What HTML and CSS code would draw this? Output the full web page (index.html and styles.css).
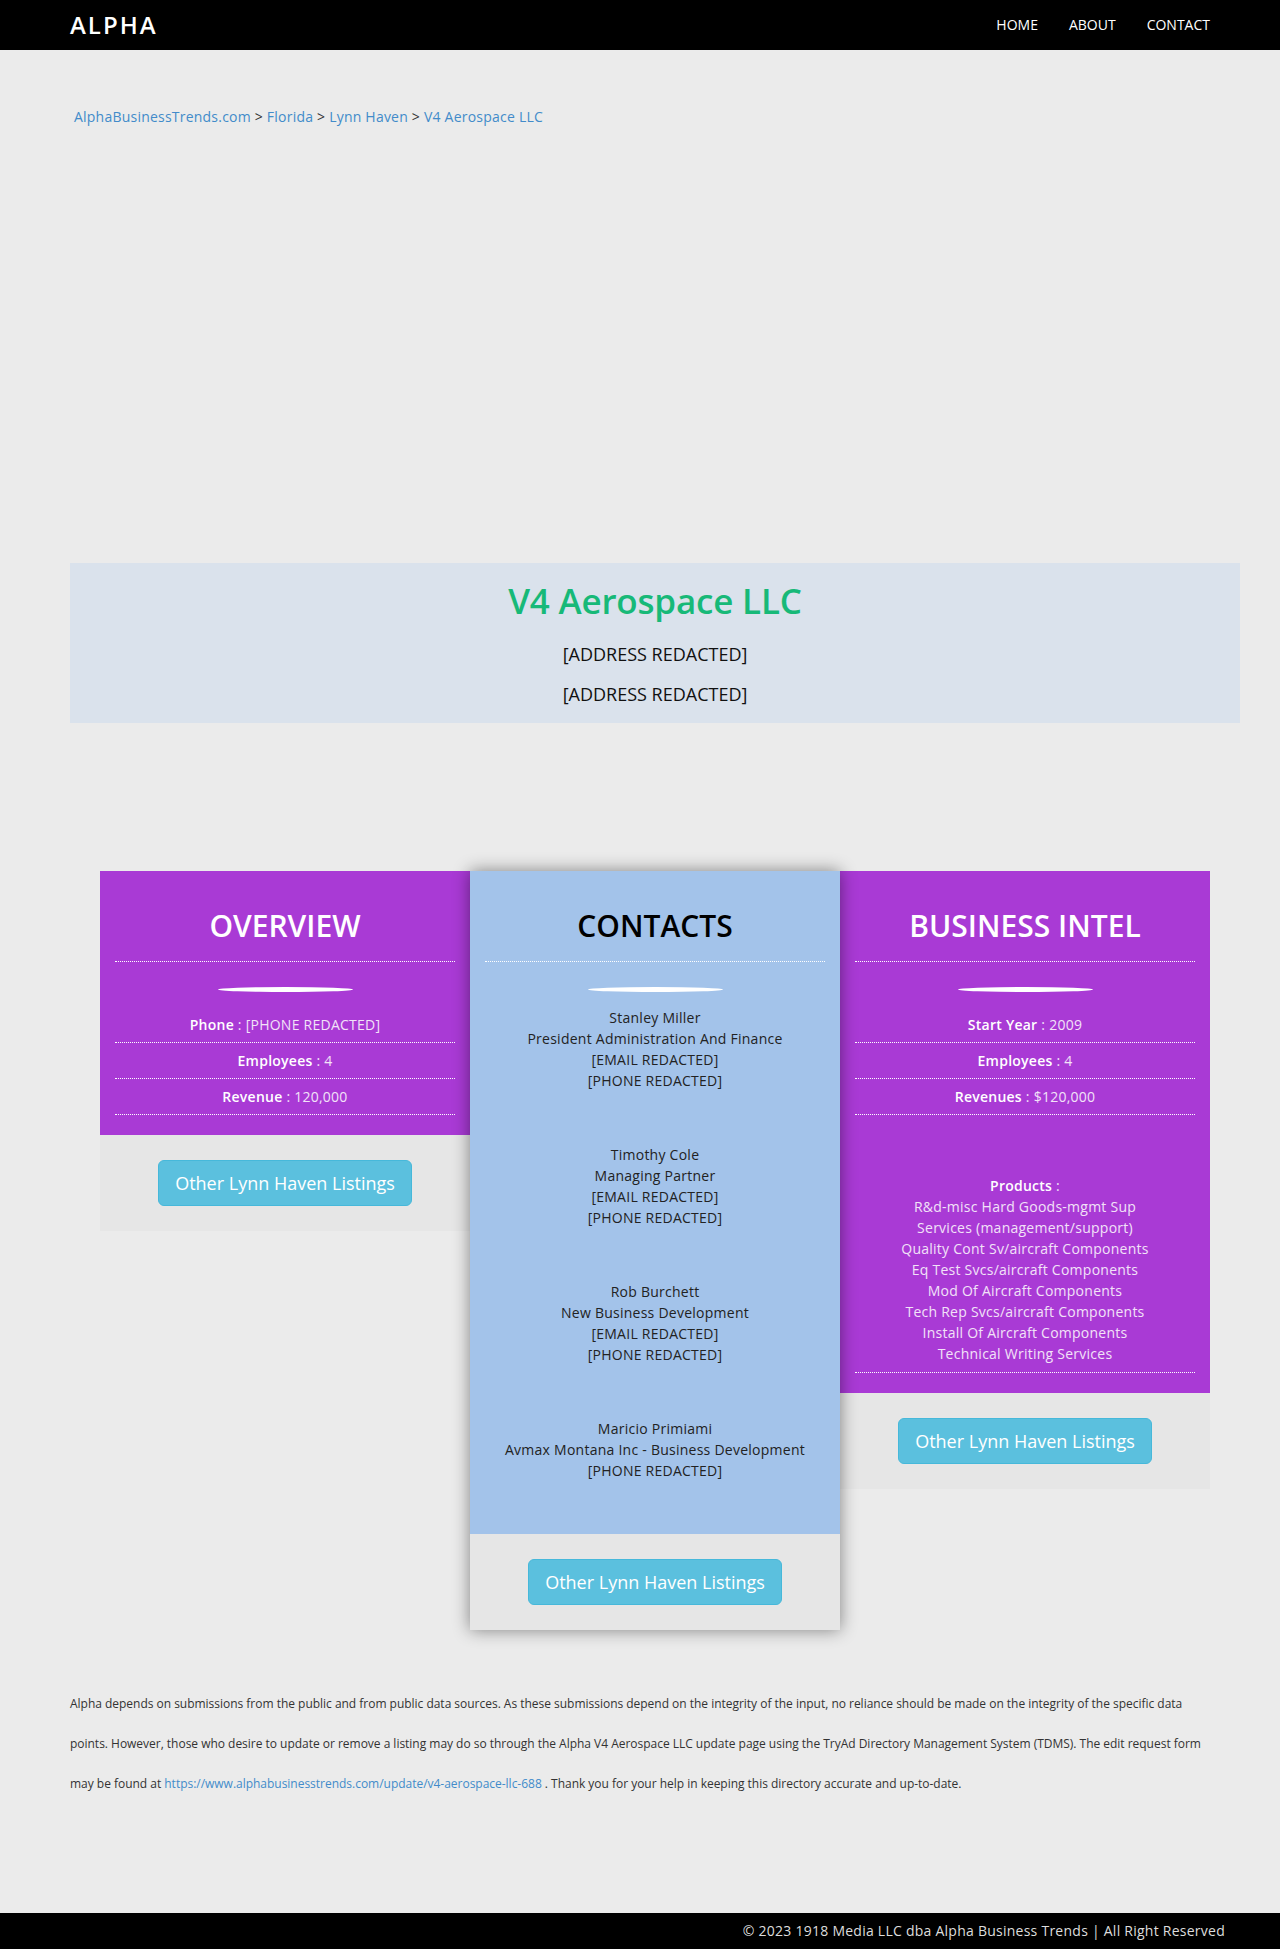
FILE: index.html
```html
<!DOCTYPE html>
<html lang="en">
<head>
<meta charset="utf-8">
<title>V4 Aerospace LLC</title>
<link rel="stylesheet" href="styles.css">
</head>
<body>
<header class="topbar">
  <div class="topbar-inner">
    <a class="brand" href="#">ALPHA</a>
    <nav class="nav">
      <a href="#">HOME</a>
      <a href="#">ABOUT</a>
      <a href="#">CONTACT</a>
    </nav>
  </div>
</header>

<main class="main">
  <div class="crumbs">
    <a href="#">AlphaBusinessTrends.com</a> &gt; <a href="#">Florida</a> &gt; <a href="#">Lynn Haven</a> &gt; <a href="#">V4 Aerospace LLC</a>
  </div>

  <div class="ad-space"></div>

  <section class="company">
    <h1 class="company-name">V4 Aerospace LLC</h1>
    <p class="addr">[ADDRESS REDACTED]</p>
    <p class="addr">[ADDRESS REDACTED]</p>
  </section>

  <section class="cards">
    <div class="card">
      <div class="card-body purple">
        <h2 class="card-title">OVERVIEW</h2>
        <div class="swoosh"></div>
        <ul class="facts">
          <li><b>Phone</b> <span class="val">: [PHONE REDACTED]</span></li>
          <li><b>Employees</b> <span class="val">: 4</span></li>
          <li><b>Revenue</b> <span class="val">: 120,000</span></li>
        </ul>
      </div>
      <div class="card-foot"><a class="btn" href="#">Other Lynn Haven Listings</a></div>
    </div>

    <div class="card card-raised">
      <div class="card-body blue">
        <h2 class="card-title dark">CONTACTS</h2>
        <div class="swoosh"></div>
        <div class="contacts">
          <p class="contact">Stanley Miller<br>President Administration And Finance<br>[EMAIL REDACTED]<br>[PHONE REDACTED]</p>
          <p class="contact">Timothy Cole<br>Managing Partner<br>[EMAIL REDACTED]<br>[PHONE REDACTED]</p>
          <p class="contact">Rob Burchett<br>New Business Development<br>[EMAIL REDACTED]<br>[PHONE REDACTED]</p>
          <p class="contact">Maricio Primiami<br>Avmax Montana Inc - Business Development<br>[PHONE REDACTED]</p>
        </div>
      </div>
      <div class="card-foot"><a class="btn" href="#">Other Lynn Haven Listings</a></div>
    </div>

    <div class="card">
      <div class="card-body purple">
        <h2 class="card-title">BUSINESS INTEL</h2>
        <div class="swoosh"></div>
        <ul class="facts">
          <li><b>Start Year</b> <span class="val">: 2009</span></li>
          <li><b>Employees</b> <span class="val">: 4</span></li>
          <li><b>Revenues</b> <span class="val">: $120,000</span></li>
          <li class="products"><b>Products</b> <span class="val">:</span><br><span class="val">R&amp;d-misc Hard Goods-mgmt Sup<br>Services (management/support)<br>Quality Cont Sv/aircraft Components<br>Eq Test Svcs/aircraft Components<br>Mod Of Aircraft Components<br>Tech Rep Svcs/aircraft Components<br>Install Of Aircraft Components<br>Technical Writing Services</span></li>
        </ul>
      </div>
      <div class="card-foot"><a class="btn" href="#">Other Lynn Haven Listings</a></div>
    </div>
  </section>

  <p class="disclaimer">Alpha depends on submissions from the public and from public data sources. As these submissions depend on the integrity of the input, no reliance should be made on the integrity of the specific data points. However, those who desire to update or remove a listing may do so through the Alpha V4 Aerospace LLC update page using the TryAd Directory Management System (TDMS). The edit request form may be found at <a href="#">https://www.alphabusinesstrends.com/update/v4-aerospace-llc-688</a> . Thank you for your help in keeping this directory accurate and up-to-date.</p>
</main>

<footer class="footer">
  <div class="footer-inner">© 2023 1918 Media LLC dba Alpha Business Trends | All Right Reserved</div>
</footer>
</body>
</html>
```

FILE: styles.css
```css
* { box-sizing: border-box; }

html, body { margin: 0; padding: 0; }

body {
  background: #ebebeb;
  font-family: "Open Sans", "DejaVu Sans", sans-serif;
  font-size: 14px;
  color: #333;
  min-height: 1949px;
  display: flex;
  flex-direction: column;
}

a { text-decoration: none; }

/* header */
.topbar {
  background: #000;
  height: 50px;
}
.topbar-inner {
  width: 1140px;
  margin-left: 70px;
  height: 50px;
  display: flex;
  align-items: center;
  justify-content: space-between;
}
.brand {
  color: #fff;
  font-size: 24px;
  font-weight: 600;
  letter-spacing: 2px;
  line-height: 50px;
}
.nav {
  display: flex;
  gap: 31px;
}
.nav a {
  color: #fff;
  font-size: 14px;
  line-height: 50px;
}

/* main */
.main {
  width: 1170px;
  margin-left: 70px;
  flex: 1 0 auto;
}
.crumbs {
  margin-top: 57px;
  padding-left: 4px;
  line-height: 20px;
  font-size: 14px;
  letter-spacing: 0.22px;
  color: #333;
}
.crumbs a { color: #428bca; }

.ad-space { height: 436px; }

.company {
  background: #dae2ec;
  height: 160px;
  padding-top: 17px;
  text-align: center;
}
.company-name {
  margin: 0;
  font-size: 35px;
  font-weight: 600;
  line-height: 42px;
  letter-spacing: -0.2px;
  color: #17b978;
}
.addr {
  margin: 0;
  font-size: 18px;
  line-height: 40px;
  color: #111;
}
.company-name + .addr { margin-top: 12px; }

/* cards */
.cards {
  margin-top: 148px;
  padding: 0 30px;
  display: flex;
  align-items: flex-start;
}
.card {
  width: 370px;
  position: relative;
}
.card-raised {
  z-index: 2;
  box-shadow: 0 0 16px rgba(0, 0, 0, 0.45);
}
.card-body {
  padding: 0 15px 20px;
  text-align: center;
}
.purple { background: #a93ad5; color: #fff; }
.blue { background: #a3c3ea; color: #222; padding-bottom: 0; }

.card-title {
  margin: 0;
  padding-top: 38px;
  padding-bottom: 19px;
  font-size: 30px;
  font-weight: 600;
  line-height: 33px;
  color: #fff;
  border-bottom: 1px dotted #fff;
}
.card-title.dark { color: #000; }

.swoosh {
  width: 135px;
  height: 5px;
  margin: 25px auto 0;
  background: #fff;
  border-radius: 50%;
}

.facts {
  list-style: none;
  margin: 15px 0 0;
  padding: 0;
  letter-spacing: 0.25px;
}
.facts li {
  padding: 8px 0;
  line-height: 19px;
  border-bottom: 1px dotted #fff;
}
.facts b { font-weight: 600; color: #fff; }
.val { color: #f2e2f8; }
.facts .products {
  padding-top: 60px;
  line-height: 21px;
}

.contacts { margin-top: 15px; letter-spacing: 0.25px; }
.contact {
  margin: 0;
  padding-bottom: 53px;
  line-height: 21px;
}

.card-foot {
  background: #e6e6e6;
  padding: 25px 0;
  text-align: center;
}
.btn {
  display: inline-block;
  background: #5bc0de;
  border: 1px solid #46b8da;
  border-radius: 6px;
  padding: 10px 16px;
  font-size: 18px;
  line-height: 24px;
  color: #fff;
}

/* disclaimer */
.disclaimer {
  margin: 54px 0 0;
  width: 1140px;
  font-size: 12px;
  line-height: 40px;
  letter-spacing: -0.02px;
  color: #333;
}
.disclaimer a { color: #428bca; }

/* footer */
.footer {
  background: #000;
  height: 36px;
}
.footer-inner {
  width: 1170px;
  margin-left: 70px;
  padding-right: 15px;
  text-align: right;
  line-height: 36px;
  font-size: 14px;
  letter-spacing: 0.25px;
  color: #ddd;
}
```
